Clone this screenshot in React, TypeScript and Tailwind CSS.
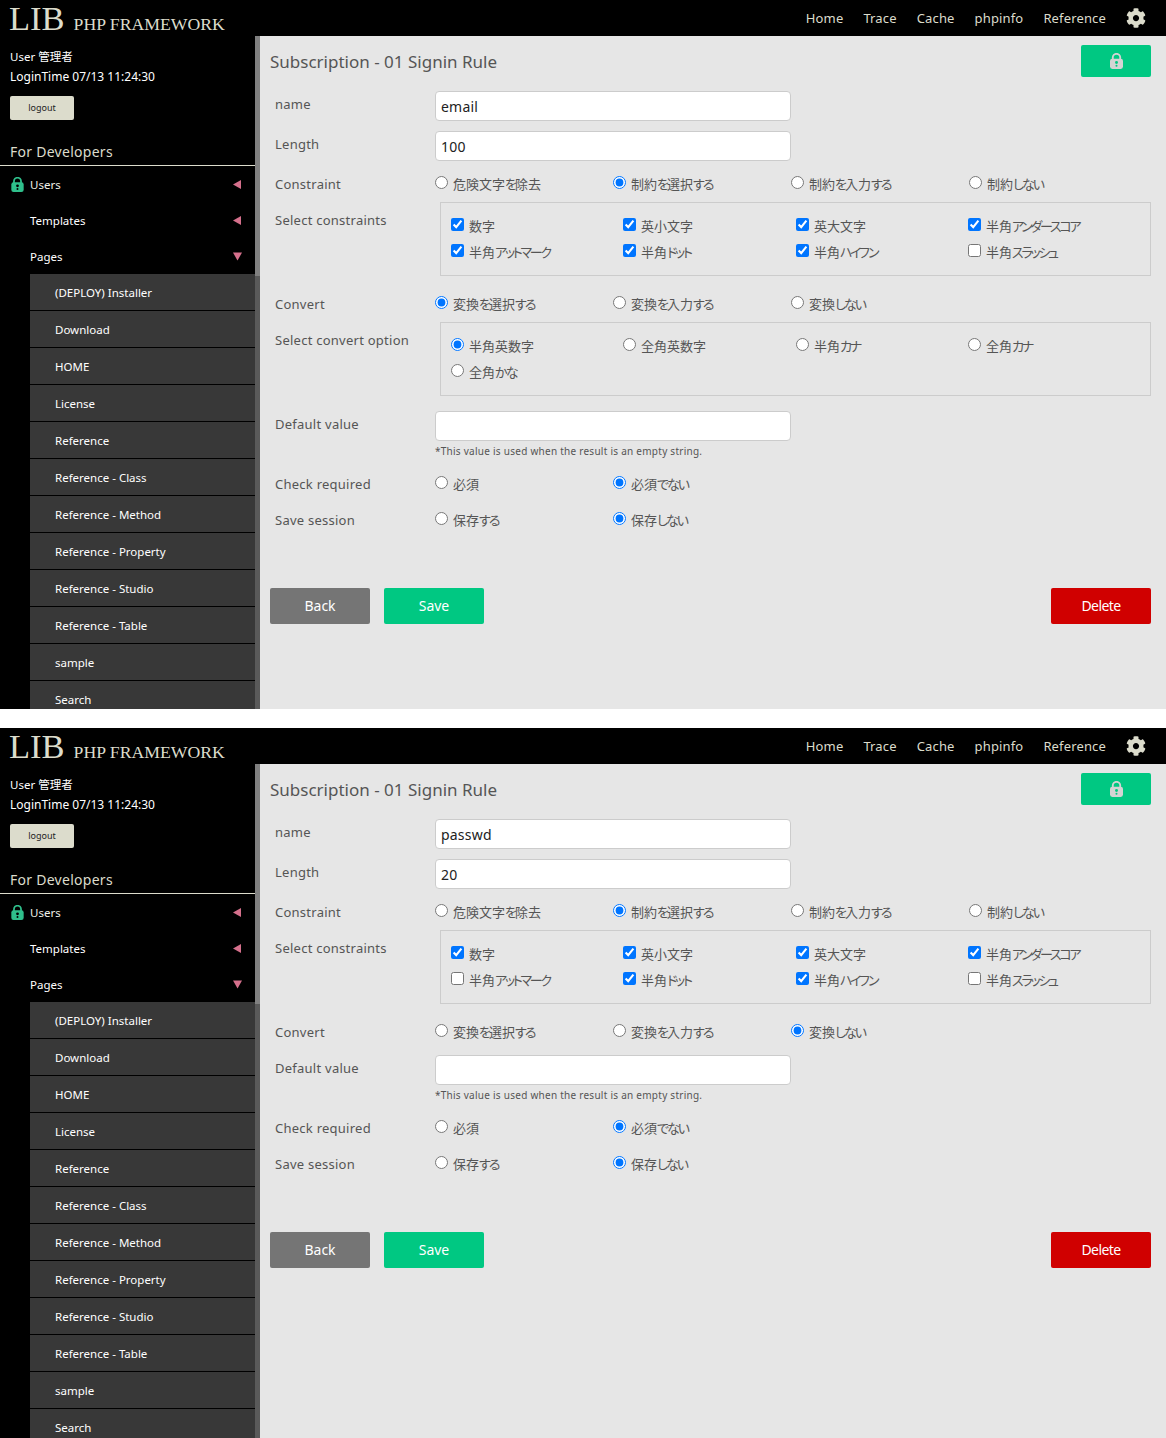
import React from 'react';
import { FaCog } from 'react-icons/fa';

const pages = [
  '(DEPLOY) Installer',
  'Download',
  'HOME',
  'License',
  'Reference',
  'Reference - Class',
  'Reference - Method',
  'Reference - Property',
  'Reference - Studio',
  'Reference - Table',
  'sample',
  'Search',
];

const LockIcon = ({ className, hole }: { className: string; hole: string }) => (
  <svg viewBox="0 0 14 17" className={className}>
    <path d="M3 7V4.8a4 4 0 0 1 8 0V7" fill="none" stroke="currentColor" strokeWidth="2" />
    <rect x="0" y="6" width="14" height="11" rx="2.5" fill="currentColor" />
    <circle cx="7" cy="10" r="1.6" fill={hole} />
    <circle cx="7" cy="13.6" r="1.1" fill={hole} />
  </svg>
);

const Arrow = ({ down }: { down?: boolean }) => (
  <svg viewBox="0 0 9 9" className="w-[9px] h-[9px] text-[#d5708c] ml-auto mr-[13px] -mt-[2px]">
    {down ? <path d="M0 0.5H9L4.5 8.5Z" fill="currentColor" /> : <path d="M8 0V9L0 4.5Z" fill="currentColor" />}
  </svg>
);

// kana sets narrower than the CJK font gives, so tighten just those runs
const Jp = ({ text }: { text: string }) => (
  <span className="pt-px">
    {text.split(/([\u30a0-\u30ff]+|[\u3040-\u309f]+)/).map((run, i) => {
      if (/[\u30a0-\u30ff]/.test(run)) return <span key={i} className="tracking-[-2.3px]">{run}</span>;
      if (/[\u3040-\u309f]/.test(run)) return <span key={i} className="tracking-[-2px]">{run}</span>;
      return run;
    })}
  </span>
);

const Sidebar = () => (
  <aside className="w-[255px] shrink-0 bg-black text-white overflow-hidden">
    <div className="pl-[10px] pt-[11px] text-[12px] leading-[20px]">
      <p className="text-[11.5px]">User 管理者</p>
      <p>LoginTime 07/13 11:24:30</p>
      <button className="block mt-[9px] w-[64px] h-[24px] rounded-[2px] bg-[#dcdccc] text-[#222] text-[9px]">logout</button>
    </div>
    <h2 className="mt-[21px] pl-[10px] h-[24px] border-b border-[#dcdccc] text-[#dcdccc] text-[14px] tracking-[0.27px] leading-[22px] box-content pb-0">For Developers</h2>
    <nav className="text-[11.5px]">
      <div className="h-[36px] flex items-center pl-[11px] pt-[2px]">
        <LockIcon className="w-[13px] h-[15px] text-[#2fbf8b] mr-[6px] -mt-[2px]" hole="#000" />
        <span className="text-[#f0f0e8]">Users</span>
        <Arrow />
      </div>
      <div className="h-[36px] flex items-center pl-[30px] pt-[2px]">
        <span>Templates</span>
        <Arrow />
      </div>
      <div className="h-[36px] flex items-center pl-[30px] pt-[2px]">
        <span>Pages</span>
        <Arrow down />
      </div>
      <ul className="ml-[30px] bg-[#383838]">
        {pages.map((p) => (
          <li key={p} className="h-[37px] border-b border-black pl-[25px] pt-px leading-[36px]">{p}</li>
        ))}
      </ul>
    </nav>
  </aside>
);

const Field = ({ label, value }: { label: string; value: string }) => (
  <div className="flex h-[30px] mb-[10px]">
    <label className="w-[165px] pl-[5px] leading-[26px] tracking-[0.25px]">{label}</label>
    <input
      readOnly
      value={value}
      className="w-[356px] h-[30px] bg-white border border-[#ccc] rounded-[4px] px-[5px] text-[14px] tracking-[0.2px] text-[#222]"
    />
  </div>
);

const RadioRow = ({
  label,
  name,
  options,
  checked,
  className,
}: {
  label: string;
  name: string;
  options: string[];
  checked: number;
  className: string;
}) => (
  <div className={`flex items-center h-[26px] ${className}`}>
    <span className="w-[165px] pl-[5px] pt-[2px] tracking-[0.25px]">{label}</span>
    {options.map((o, i) => (
      <label key={o} className="w-[178px] flex items-center [font-feature-settings:'palt']">
        <input type="radio" name={name} readOnly checked={i === checked} className="m-0 mr-[5px] -mt-[3px]" />
        <Jp text={o} />
      </label>
    ))}
  </div>
);

const OptionBox = ({ label, children, className }: { label: string; children: React.ReactNode; className: string }) => (
  <div className={`flex ${className}`}>
    <span className="w-[170px] pl-[5px] pt-[8px] leading-[20px] tracking-[0.25px]">{label}</span>
    <div className="w-[711px] h-[74px] border border-[#ccc] pl-[10px] pt-[10px] grid grid-cols-[172px_173px_172px_172px] auto-rows-[26px]">
      {children}
    </div>
  </div>
);

const Opt = ({ type, name, label, on }: { type: string; name: string; label: string; on?: boolean }) => (
  <label className="flex items-center [font-feature-settings:'palt']">
    <input type={type} name={name} readOnly checked={!!on} className="m-0 mr-[5px] -mt-[3px]" />
    <Jp text={label} />
  </label>
);

const Screen = ({
  name,
  length,
  prefix,
  at,
  convert,
  height,
}: {
  name: string;
  length: string;
  prefix: string;
  at: boolean;
  convert: number;
  height: string;
}) => (
  <div className={`flex flex-col overflow-hidden ${height}`}>
    <header className="h-[36px] shrink-0 bg-black flex items-center text-[#dcdccc]">
      <div className="pl-[9px] flex items-baseline font-['Liberation_Serif',serif] leading-none">
        <span className="text-[34.5px]">LIB</span>
        <span className="text-[17.7px] ml-[9px]">PHP FRAMEWORK</span>
      </div>
      <nav className="ml-auto flex items-center gap-[20px] text-[13px] tracking-[0.15px] pt-px">
        <a>Home</a>
        <a>Trace</a>
        <a>Cache</a>
        <a>phpinfo</a>
        <a>Reference</a>
      </nav>
      <FaCog className="w-[20px] h-[20px] ml-[20px] mr-[20px]" />
    </header>
    <div className="flex flex-1 min-h-0">
      <Sidebar />
      <div className="w-[5px] shrink-0 flex flex-col">
        <div className="h-[240px] bg-[#808080]" />
        <div className="flex-1 bg-[#5a5a5a]" />
      </div>
      <main className="flex-1 bg-[#e6e6e6] pl-[10px] pr-[15px] text-[13px] text-[#555]">
        <div className="flex justify-between pt-[9px] h-[55px]">
          <h1 className="text-[17px] leading-[34px] text-[#555]">Subscription - 01 Signin Rule</h1>
          <button className="w-[70px] h-[32px] rounded-[2px] bg-[#00c882] flex items-center justify-center">
            <LockIcon className="w-[13px] h-[16px] text-[#d4d4d4]" hole="#00c882" />
          </button>
        </div>
        <Field label="name" value={name} />
        <Field label="Length" value={length} />
        <RadioRow
          label="Constraint"
          name={`${prefix}-constraint`}
          options={['危険文字を除去', '制約を選択する', '制約を入力する', '制約しない']}
          checked={1}
          className=""
        />
        <OptionBox label="Select constraints" className="mt-[5px]">
          <Opt type="checkbox" name="c1" label="数字" on />
          <Opt type="checkbox" name="c2" label="英小文字" on />
          <Opt type="checkbox" name="c3" label="英大文字" on />
          <Opt type="checkbox" name="c4" label="半角アンダースコア" on />
          <Opt type="checkbox" name="c5" label="半角アットマーク" on={at} />
          <Opt type="checkbox" name="c6" label="半角ドット" on />
          <Opt type="checkbox" name="c7" label="半角ハイフン" on />
          <Opt type="checkbox" name="c8" label="半角スラッシュ" />
        </OptionBox>
        <RadioRow
          label="Convert"
          name={`${prefix}-convert`}
          options={['変換を選択する', '変換を入力する', '変換しない']}
          checked={convert}
          className="mt-[15px]"
        />
        {convert === 0 && (
          <OptionBox label="Select convert option" className="mt-[5px]">
            <Opt type="radio" name={`${prefix}-opt`} label="半角英数字" on />
            <Opt type="radio" name={`${prefix}-opt`} label="全角英数字" />
            <Opt type="radio" name={`${prefix}-opt`} label="半角カナ" />
            <Opt type="radio" name={`${prefix}-opt`} label="全角カナ" />
            <Opt type="radio" name={`${prefix}-opt`} label="全角かな" />
          </OptionBox>
        )}
        <div className={`${convert === 0 ? 'mt-[15px]' : 'mt-[10px]'} flex h-[30px]`}>
          <label className="w-[165px] pl-[5px] leading-[26px] tracking-[0.25px]">Default value</label>
          <input readOnly className="w-[356px] h-[30px] bg-white border border-[#ccc] rounded-[4px]" />
        </div>
        <p className="ml-[165px] mt-[3px] text-[10px] leading-[14px] tracking-[0.26px]">*This value is used when the result is an empty string.</p>
        <RadioRow
          label="Check required"
          name={`${prefix}-required`}
          options={['必須', '必須でない']}
          checked={1}
          className="mt-[13px]"
        />
        <RadioRow
          label="Save session"
          name={`${prefix}-session`}
          options={['保存する', '保存しない']}
          checked={1}
          className="mt-[10px]"
        />
        <div className="flex mt-[55px] text-[14px] text-white">
          <button className="w-[100px] h-[36px] pb-[2px] rounded-[2px] bg-[#757575]">Back</button>
          <button className="w-[100px] h-[36px] pb-[2px] rounded-[2px] bg-[#00c882] ml-[14px]">Save</button>
          <button className="w-[100px] h-[36px] pb-[2px] rounded-[2px] bg-[#d00000] ml-auto tracking-[-0.6px]">Delete</button>
        </div>
      </main>
    </div>
  </div>
);

export default function App() {
  return (
    <div className="w-[1166px] h-[1438px] bg-white font-['Noto_Sans','Noto_Sans_CJK_JP',sans-serif] overflow-hidden">
      <Screen name="email" length="100" prefix="a" at convert={0} height="h-[709px]" />
      <div className="h-[19px]" />
      <Screen name="passwd" length="20" prefix="b" at={false} convert={2} height="h-[710px]" />
    </div>
  );
}
